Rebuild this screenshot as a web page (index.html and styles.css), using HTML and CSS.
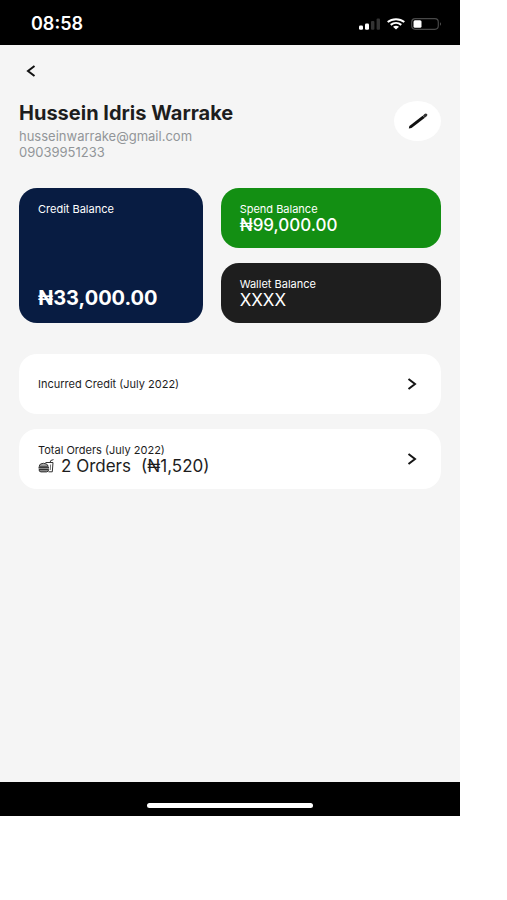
FILE: index.html
```html
<!DOCTYPE html>
<html lang="en">
<head>
<meta charset="utf-8">
<meta name="viewport" content="width=device-width, initial-scale=1">
<title>Profile</title>
<link rel="stylesheet" href="styles.css">
</head>
<body>
<div class="phone">
  <header class="status">
    <span class="clock">08:58</span>
    <div class="indicators">
      <svg width="22" height="12" viewBox="0 0 22 12" aria-hidden="true">
        <rect x="0" y="7.5" width="4" height="4.2" rx="1.2" fill="#fff"/>
        <rect x="6" y="5.5" width="4" height="6.2" rx="1.2" fill="#fff"/>
        <rect x="12" y="3" width="3.4" height="8.7" rx="1" fill="#333"/>
        <rect x="17.6" y="0.5" width="3.4" height="11.2" rx="1" fill="#333"/>
      </svg>
      <svg width="18" height="12" viewBox="0 0 18 12" fill="none" stroke="#fff" stroke-width="2" aria-hidden="true">
        <path d="M.7 4.1C5.4.2 12.600.2 17.300 4.100"/>
        <path d="M3.700 6.900C6.800 4.400 11.200 4.400 14.300 6.900"/>
        <path d="M6 8.700Q9 6.700 12 8.700L9 11.600Z" fill="#fff" stroke="none"/>
      </svg>
      <svg width="31" height="12" viewBox="0 0 31 12" aria-hidden="true">
        <rect x=".7" y=".7" width="26.600" height="10.600" rx="3.500" fill="none" stroke="#484848" stroke-width="1.200"/>
        <rect x="2.500" y="2.300" width="8" height="7.400" rx="1.500" fill="#fff"/>
        <path d="M29 4Q30.600 6 29 8Z" fill="#777"/>
      </svg>
    </div>
  </header>

  <main class="content">
    <button class="back" type="button" aria-label="Back">
      <svg width="10" height="12" viewBox="0 0 10 12" fill="none" stroke="#111" stroke-width="2" aria-hidden="true"><path d="M8.500 1L2 6l6.500 5"/></svg>
    </button>

    <section class="profile">
      <div>
        <h1 class="name">Hussein Idris Warrake</h1>
        <p class="contact">husseinwarrake@gmail.com</p>
        <p class="contact">09039951233</p>
      </div>
      <button class="edit" type="button" aria-label="Edit profile">
        <svg width="20" height="16" viewBox="0 0 20 16" aria-hidden="true">
          <path d="M.8 15.500L1.400 12.900 14.600 2.700 16.900 4.700 3.500 14.900Z" fill="#111"/>
          <path d="M14.900 2.700L16.500 1Q18 .1 19 1.100T18.700 3.300L16.800 4.700Z" fill="#333"/>
        </svg>
      </button>
    </section>

    <section class="balances">
      <article class="card credit">
        <h2 class="label">Credit Balance</h2>
        <p class="total">₦33,000.00</p>
      </article>
      <article class="card spend">
        <h2 class="label">Spend Balance</h2>
        <p class="amount">₦99,000.00</p>
      </article>
      <article class="card wallet">
        <h2 class="label">Wallet Balance</h2>
        <p class="amount masked">XXXX</p>
      </article>
    </section>

    <nav class="links">
      <a class="card row" href="#credit">
        <span class="label">Incurred Credit (July 2022)</span>
        <svg width="10" height="12" viewBox="0 0 10 12" fill="none" stroke="#151515" stroke-width="2" aria-hidden="true"><path d="M1.500 1L8 6l-6.500 5"/></svg>
      </a>
      <a class="card row" href="#orders">
        <span>
          <span class="label">Total Orders (July 2022)</span>
          <span class="orders">
            <svg width="17" height="14" viewBox="0 0 17 14" fill="none" stroke="#333" aria-hidden="true">
              <path d="M7.500 3.500H15L14.300 12.800H10.500M12 3.500L12.800 1.500 15.500.6"/>
              <path d="M1 7.300Q1.600 4.300 5.500 4.300T10.300 7.300Z" fill="#aaa"/>
              <path d="M.5 8.800H11" stroke-width="1.500"/>
              <path d="M1 10.500H10.700Q10.500 12.900 8.500 12.900H3Q1 12.900 1 10.500Z" fill="#888"/>
              <path d="M12.600 5.500L12.300 11" stroke="#777"/>
            </svg>
            <span>2 Orders</span>
            <span class="spent">(₦1,520)</span>
          </span>
        </span>
        <svg width="10" height="12" viewBox="0 0 10 12" fill="none" stroke="#151515" stroke-width="2" aria-hidden="true"><path d="M1.500 1L8 6l-6.500 5"/></svg>
      </a>
    </nav>
  </main>

  <footer class="home"><div class="home-bar"></div></footer>
</div>
</body>
</html>
```
FILE: styles.css
```css
* { box-sizing: border-box; }

body {
  display: flex;
  min-height: 100vh;
  margin: 0;
  padding: 0 47px 84px 0;
  background: #fff;
  color: #1d1d1d;
  font-family: Inter, "Liberation Sans", sans-serif;
}

h1, h2, p { margin: 0; }

button {
  padding: 0;
  border: 0;
  background: none;
  cursor: pointer;
}

svg { display: block; flex: none; }

.phone {
  display: flex;
  flex: 1;
  flex-direction: column;
  background: #f5f5f5;
}

.status {
  display: flex;
  align-items: center;
  justify-content: space-between;
  height: 45px;
  padding: 3px 18px 0 31px;
  background: #000;
  color: #fff;
}

.clock { font-size: 18px; font-weight: 600; line-height: 20px; }

.indicators { display: flex; align-items: center; gap: 6px; }

.content { flex: 1; padding: 16px 19px; }

.back {
  display: grid;
  place-items: center;
  width: 24px;
  height: 20px;
}

.profile {
  display: flex;
  justify-content: space-between;
  margin-top: 20px;
}

.name {
  margin-bottom: 3px;
  font-size: 20px;
  font-weight: 700;
  line-height: 24px;
}

.contact { color: #929599; font-size: 13px; line-height: 16px; }

.edit {
  display: grid;
  place-items: center;
  width: 47px;
  height: 40px;
  border-radius: 50%;
  background: #fff;
}

.balances {
  display: grid;
  grid-template-columns: 5fr 6fr;
  grid-template-rows: 60px 60px;
  gap: 15px 18px;
  margin-top: 28px;
}

.card { padding: 14px 19px; border-radius: 18px; }

.credit {
  display: flex;
  grid-row: span 2;
  flex-direction: column;
  justify-content: space-between;
  background: #081c42;
  color: #fff;
}

.spend { background: #138f13; color: #fff; }
.wallet { background: #1e1e1e; color: #fff; }

.label {
  display: block;
  font-size: 11px;
  font-weight: 400;
  line-height: 15px;
}

.total { font-size: 20px; font-weight: 700; line-height: 22px; }
.amount { font-size: 17px; font-weight: 500; line-height: 16px; }
.masked { font-weight: 400; }

.links { display: grid; gap: 15px; margin-top: 31px; }

.row {
  display: flex;
  align-items: center;
  justify-content: space-between;
  min-height: 60px;
  padding: 12px 24px 12px 19px;
  background: #fff;
  color: #1d1d1d;
  text-decoration: none;
}

.orders {
  display: flex;
  align-items: center;
  gap: 6px;
  padding-bottom: 2px;
  font-size: 17px;
  line-height: 16px;
}

.spent { margin-left: 4px; }

.home {
  display: flex;
  align-items: flex-end;
  justify-content: center;
  height: 34px;
  padding-bottom: 8px;
  background: #000;
}

.home-bar {
  width: 36%;
  height: 5px;
  border-radius: 3px;
  background: #fff;
}
```
